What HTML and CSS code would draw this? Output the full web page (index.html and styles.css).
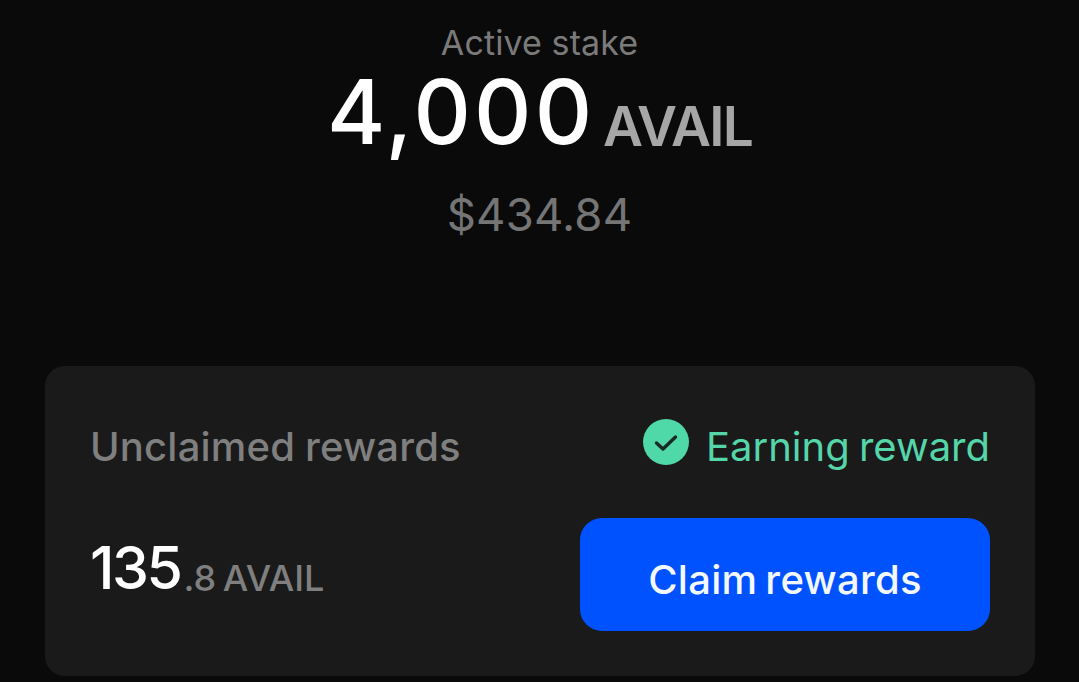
FILE: index.html
```html
<!DOCTYPE html>
<html lang="en">
<head>
  <meta charset="UTF-8">
  <meta name="viewport" content="width=device-width, initial-scale=1.0">
  <title>Active stake</title>
  <link rel="stylesheet" href="styles.css">
</head>
<body>
  <div class="stake">
    <div class="stake-label">Active stake</div>
    <div class="stake-amount">
      <span class="stake-value">4,000</span>
      <span class="stake-unit">AVAIL</span>
    </div>
    <div class="stake-usd">$434.84</div>
  </div>

  <div class="card">
    <div class="card-row">
      <div class="card-title">Unclaimed rewards</div>
      <div class="status">
        <svg class="status-icon" width="46" height="46" viewBox="0 0 46 46">
          <circle cx="23" cy="23" r="23" fill="#4fd8a8"/>
          <path d="M13.5 24l6.5 6 12.5-12" fill="none" stroke="#1a2a26" stroke-width="3.4" stroke-linecap="round" stroke-linejoin="round"/>
        </svg>
        <span>Earning reward</span>
      </div>
    </div>
    <div class="card-row claim-row">
      <div class="reward">
        <span class="reward-value">135</span><span class="reward-rest">.8 AVAIL</span>
      </div>
      <button class="claim">Claim rewards</button>
    </div>
  </div>
</body>
</html>
```

FILE: styles.css
```css
html, body {
  height: 100%;
}

body {
  margin: 0;
  background-color: #0a0a0b;
  font-family: Inter, "Noto Sans", sans-serif;
  overflow: hidden;
}

.stake {
  padding-top: 23px;
  height: 343px;
  box-sizing: border-box;
  text-align: center;
}

.stake-label {
  font-size: 34px;
  line-height: 40px;
  letter-spacing: 0.1px;
  color: #7a7a7a;
}

.stake-amount {
  margin-top: 4px;
  height: 90px;
  line-height: 90px;
  white-space: nowrap;
}

.stake-value {
  font-size: 89px;
  font-weight: 500;
  letter-spacing: 3.2px;
  color: #fff;
}

.stake-unit {
  margin-left: 3px;
  font-size: 55px;
  font-weight: 600;
  letter-spacing: -1.8px;
  vertical-align: -2px;
  color: #a6a6a6;
}

.stake-usd {
  margin-top: 31px;
  font-size: 45.5px;
  line-height: 54px;
  letter-spacing: 0.2px;
  color: #757575;
}

.card {
  width: 990px;
  height: 310px;
  margin: 23px 0 0 45px;
  padding: 52px 45px 45px 45px;
  box-sizing: border-box;
  background-color: #1a1a1b;
  border-radius: 20px;
}

.card-row {
  display: flex;
  justify-content: space-between;
  align-items: center;
}

.card-title {
  font-size: 40px;
  line-height: 58px;
  font-weight: 500;
  letter-spacing: 0.2px;
  word-spacing: -1px;
  color: #7f7f7f;
}

.status {
  display: flex;
  align-items: center;
  gap: 17px;
  font-size: 40px;
  line-height: 58px;
  word-spacing: -2px;
  color: #55d6a9;
}

.status-icon {
  display: block;
  margin-bottom: 10px;
}

.claim-row {
  margin-top: 42px;
}

.reward {
  margin-bottom: 14px;
  color: #7f7f7f;
  font-size: 36px;
  font-weight: 500;
}

.reward-value {
  font-size: 59px;
  color: #fff;
  letter-spacing: -2.5px;
}

.reward-rest {
  margin-left: 3px;
  letter-spacing: 0;
  word-spacing: -3px;
  vertical-align: -2px;
}

.claim {
  width: 410px;
  height: 113px;
  padding: 10px 0 0;
  border: none;
  border-radius: 22px;
  background-color: #0052ff;
  color: #f4f8ff;
  font-family: inherit;
  font-size: 40px;
  font-weight: 500;
  letter-spacing: 0.3px;
  word-spacing: -3px;
  cursor: pointer;
}
```
